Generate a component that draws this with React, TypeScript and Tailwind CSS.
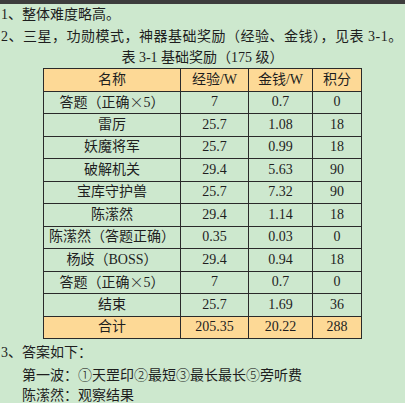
const X = <span className="font-['Noto_Sans_CJK_SC',sans-serif] font-light">×</span>;
const C = (t: string) => <span className="font-['Noto_Sans_CJK_SC',sans-serif] font-light">{t}</span>;

const rows: [React.ReactNode, string, string, string][] = [
  [<>答题（正确{X}5）</>, '7', '0.7', '0'],
  ['雷厉', '25.7', '1.08', '18'],
  ['妖魔将军', '25.7', '0.99', '18'],
  ['破解机关', '29.4', '5.63', '90'],
  ['宝库守护兽', '25.7', '7.32', '90'],
  ['陈潆然', '29.4', '1.14', '18'],
  ['陈潆然（答题正确）', '0.35', '0.03', '0'],
  ['杨歧（BOSS）', '29.4', '0.94', '18'],
  [<>答题（正确{X}5）</>, '7', '0.7', '0'],
  ['结束', '25.7', '1.69', '36'],
];

const cell = 'border border-[#2a2a2a] p-0 text-center h-[22.5px] leading-none';

export default function App() {
  return (
    <div className="w-[405px] h-[403px] overflow-hidden bg-[#cde8ce] text-[#1e1e1e] text-[14px] font-['Liberation_Serif','Noto_Sans_CJK_SC',serif]">
      <div className="h-[4px] bg-[#3d3d3d]" />
      <div className="leading-[22px]">
        <p className="pl-px">1、整体难度略高。</p>
        <p className="pl-px tracking-[0.5px] whitespace-nowrap">2、三星，功勋模式，神器基础奖励（经验、金钱），见表 3-1。</p>
        <p className="text-center -mt-px">表 3-1 基础奖励（175 级）</p>
      </div>

      <table className="ml-[43px] border-collapse table-fixed w-[318px] -mt-[1px]">
        <colgroup>
          <col className="w-[137px]" />
          <col className="w-[68px]" />
          <col className="w-[64px]" />
          <col className="w-[49px]" />
        </colgroup>
        <thead>
          <tr className="bg-[#fdd996]">
            <td className={cell}>名称</td>
            <td className={cell}>经验/W</td>
            <td className={cell}>金钱/W</td>
            <td className={cell}>积分</td>
          </tr>
        </thead>
        <tbody>
          {rows.map((r, i) => (
            <tr key={i}>
              {r.map((v, j) => (
                <td key={j} className={cell}>
                  {v}
                </td>
              ))}
            </tr>
          ))}
          <tr className="bg-[#fdd996]">
            <td className={cell}>合计</td>
            <td className={cell}>205.35</td>
            <td className={cell}>20.22</td>
            <td className={cell}>288</td>
          </tr>
        </tbody>
      </table>

      <div className="leading-[20.5px] pt-[4px]">
        <p className="pl-px">3、答案如下：</p>
        <p className="pl-[22px]">
          第一波：{C('①')}天罡印{C('②')}最短{C('③')}最长最长{C('⑤')}旁听费
        </p>
        <p className="pl-[22px]">陈潆然：观察结果</p>
      </div>
    </div>
  );
}
